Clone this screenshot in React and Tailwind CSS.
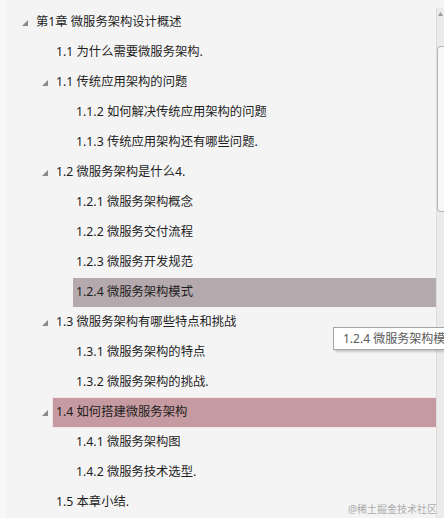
import React from 'react';

const rows = [
  { level: 0, label: '第1章 微服务架构设计概述', arrow: true },
  { level: 1, label: '1.1 为什么需要微服务架构.' },
  { level: 1, label: '1.1 传统应用架构的问题', arrow: true },
  { level: 2, label: '1.1.2 如何解决传统应用架构的问题' },
  { level: 2, label: '1.1.3 传统应用架构还有哪些问题.' },
  { level: 1, label: '1.2 微服务架构是什么4.', arrow: true },
  { level: 2, label: '1.2.1 微服务架构概念' },
  { level: 2, label: '1.2.2 微服务交付流程' },
  { level: 2, label: '1.2.3 微服务开发规范' },
  { level: 2, label: '1.2.4 微服务架构模式', hl: 'hover' },
  { level: 1, label: '1.3 微服务架构有哪些特点和挑战', arrow: true },
  { level: 2, label: '1.3.1 微服务架构的特点' },
  { level: 2, label: '1.3.2 微服务架构的挑战.' },
  { level: 1, label: '1.4 如何搭建微服务架构', arrow: true, hl: 'active' },
  { level: 2, label: '1.4.1 微服务架构图' },
  { level: 2, label: '1.4.2 微服务技术选型.' },
  { level: 1, label: '1.5 本章小结.' },
];

const indent = ['w-[22px]', 'w-[42px]', 'w-[62px]'];

const Arrow = () => (
  <svg width="6" height="6" viewBox="0 0 6 6" className="mt-[2px]">
    <polygon points="6,0 6,6 0,6" fill="#8a8a8a" />
  </svg>
);

const Row = ({ row }) => {
  const bg =
    row.hl === 'hover'
      ? 'bg-[#b4a9ad]'
      : row.hl === 'active'
      ? 'bg-[#c59aa0] ring-1 ring-[#f3e4e5]'
      : '';
  return (
    <div className="h-[30px] flex items-center">
      <div className={`${indent[row.level]} shrink-0`} />
      <div className="w-[14px] shrink-0 flex items-center">{row.arrow && <Arrow />}</div>
      <div className={`flex-1 h-[29px] -ml-[3px] pl-[3px] flex items-center whitespace-nowrap ${bg}`}>
        {row.label}
      </div>
    </div>
  );
};

export default function App() {
  return (
    <div className="relative w-[444px] h-[518px] overflow-hidden bg-[#f4f4f4] flex font-['Noto_Sans','Noto_Sans_CJK_SC',sans-serif] text-[12.3px] text-[#1e1e1e]">
      <div className="w-[6px] shrink-0 bg-[#f7f7f7]" />
      <div className="flex-1 min-w-0 pt-[7px] -ml-[6px]">
        {rows.map((r, i) => (
          <Row key={i} row={r} />
        ))}
      </div>

      {/* scrollbar */}
      <div className="w-[8px] shrink-0 mt-[8px] bg-[#ebebeb] border-l border-[#dcdcdc] flex flex-col">
        <div className="h-[12px] flex items-center justify-center">
          <svg width="5" height="4" viewBox="0 0 5 4">
            <polygon points="2.5,0 5,4 0,4" fill="#9a9a9a" />
          </svg>
        </div>
        <div className="h-[26px]" />
        <div className="h-[166px] bg-[#f7f7f7] border border-r-0 border-[#b8b8b8] rounded-tl-[4px] rounded-bl-[4px]" />
      </div>

      {/* tooltip */}
      <div className="absolute left-[333px] top-[327px] w-[130px] h-[23px] bg-white border border-[#a5a5a5] shadow-[2px_2px_2px_rgba(0,0,0,0.18)] flex items-center pl-[9px] text-[12px] text-[#5a5a5a] whitespace-nowrap">
        1.2.4 微服务架构模式
      </div>

      {/* watermark */}
      <div className="absolute right-[7px] bottom-[1px] text-[10px] text-[#ababab] whitespace-nowrap">
        @稀土掘金技术社区
      </div>
    </div>
  );
}
